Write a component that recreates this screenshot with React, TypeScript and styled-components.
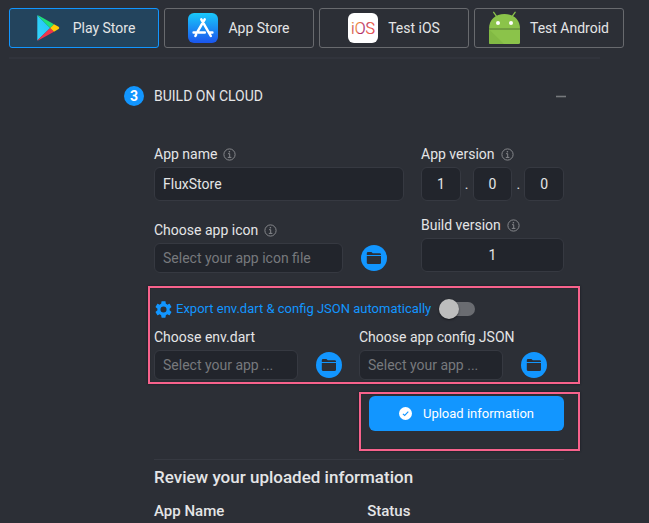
import React, { useState } from "react";
import styled, { createGlobalStyle } from "styled-components";

const blue = "#1296ff";
const line = "#363941";
const field = "#22252c";
const pink = "#f8628c";

const GlobalStyle = createGlobalStyle`
  * { box-sizing: border-box; }
  body {
    margin: 0;
    background: #2c2f36;
    color: #e4e5e6;
    font-family: Roboto, "Liberation Sans", sans-serif;
    font-size: 14px;
    line-height: 20px;
  }
  button, input { font: inherit; color: inherit; margin: 0; }
`;

const Page = styled.main`
  height: 100vh;
  overflow: hidden;
  padding: 8px 25px 0 9px;
`;

const Tabs = styled.nav`
  display: grid;
  grid-template-columns: repeat(4, minmax(0, 1fr));
  gap: 5px;
`;

const Tab = styled.button<{ $active?: boolean }>`
  display: flex;
  align-items: center;
  justify-content: center;
  gap: 10px;
  height: 40px;
  padding: 0;
  white-space: nowrap;
  border: 1px solid ${(p) => (p.$active ? blue : "#686a6e")};
  border-radius: 3px;
  background: ${(p) => (p.$active ? "#23445d" : "transparent")};
  cursor: pointer;
  svg { flex: none; }
`;

const TabsRule = styled.hr`
  height: 2px;
  margin: 9px 24px 0 0;
  border: 0;
  background: #31343c;
`;

const Section = styled.section`
  margin: 26px 57px 0 115px;
`;

const SectionHeader = styled.header`
  display: flex;
  align-items: center;
  gap: 10px;
  height: 22px;
`;

const Step = styled.span`
  width: 20px;
  border-radius: 50%;
  background: ${blue};
  color: #fff;
  text-align: center;
  font-weight: 700;
`;

const SectionTitle = styled.h2`
  flex: 1;
  margin: 0;
  font-size: 14px;
  font-weight: 400;
`;

const Collapse = styled.button`
  display: flex;
  padding: 0;
  border: 0;
  background: none;
  color: #77797d;
  cursor: pointer;
`;

const Body = styled.div`
  margin: 37px 3px 0 30px;
`;

const Columns = styled.div`
  display: grid;
  grid-template-columns: minmax(0, 1fr) 143px;
  column-gap: 17px;
`;

const Stack = styled.div<{ $gap: number }>`
  display: flex;
  flex-direction: column;
  gap: ${(p) => p.$gap}px;
`;

const Label = styled.label`
  display: flex;
  align-items: center;
  gap: 6px;
  height: 20px;
  margin-bottom: 3px;
  white-space: nowrap;
`;

const Legend = styled(Label).attrs({ as: "span" })``;

const Input = styled.input<{ $center?: boolean; $small?: boolean }>`
  display: block;
  flex: 1;
  width: 100%;
  min-width: 0;
  height: ${(p) => (p.$small ? 30 : 34)}px;
  padding: 0 8px;
  border: 1px solid ${line};
  border-radius: 6px;
  outline: 0;
  background: ${field};
  text-align: ${(p) => (p.$center ? "center" : "left")};
  text-overflow: ellipsis;
  &::placeholder { color: #77797d; opacity: 1; }
`;

const VersionRow = styled.div`
  display: flex;
  align-items: center;
`;

const Dot = styled.span`
  width: 12px;
  text-align: center;
`;

const FileRow = styled.div`
  display: flex;
  align-items: center;
  gap: 18px;
  padding-right: 17px;
`;

const FolderButton = styled.button`
  display: grid;
  place-items: center;
  flex: none;
  width: 26px;
  height: 26px;
  padding: 0;
  border: 0;
  border-radius: 50%;
  background: ${blue};
  color: #2c2f36;
  cursor: pointer;
`;

const Highlight = styled.div<{ $inset: string }>`
  position: relative;
  &::after {
    content: "";
    position: absolute;
    inset: ${(p) => p.$inset};
    border: 2px solid ${pink};
    box-shadow: 0 0 2px #16181d, inset 0 0 1px #16181d;
    pointer-events: none;
  }
`;

const ExportArea = styled(Highlight)`
  margin-top: 25px;
`;

const ExportRow = styled.div`
  display: flex;
  align-items: center;
  gap: 8px;
  height: 22px;
  margin-bottom: 7px;
`;

const ExportLabel = styled.label`
  display: flex;
  align-items: center;
  gap: 4px;
  padding-left: 1px;
  color: ${blue};
  font-size: 13px;
  white-space: nowrap;
`;

const Switch = styled.input`
  appearance: none;
  display: flex;
  align-items: center;
  width: 36px;
  height: 14px;
  border-radius: 7px;
  background: #6a6c71;
  cursor: pointer;
  &::before {
    content: "";
    width: 20px;
    height: 20px;
    border-radius: 50%;
    background: #bdbdbd;
    box-shadow: 0 1px 2px rgba(0, 0, 0, 0.5);
  }
  &:checked { justify-content: flex-end; background: #1c5c91; }
  &:checked::before { background: ${blue}; }
`;

const Halves = styled.div`
  display: grid;
  grid-template-columns: repeat(2, minmax(0, 1fr));
`;

const Actions = styled.div`
  display: flex;
  justify-content: flex-end;
  margin-top: 16px;
`;

const UploadButton = styled.button`
  display: flex;
  align-items: center;
  justify-content: center;
  gap: 11px;
  width: 195px;
  height: 35px;
  padding: 0;
  border: 0;
  border-radius: 6px;
  background: ${blue};
  color: #fff;
  font-size: 13px;
  cursor: pointer;
`;

const Rule = styled.hr`
  height: 1px;
  margin: 28px 0 0;
  border: 0;
  background: ${line};
`;

const ReviewTitle = styled.h3`
  margin: 7px 0 14px;
  font-size: 17px;
  font-weight: 500;
`;

const Table = styled.table`
  width: 100%;
  border-collapse: collapse;
  table-layout: fixed;
  font-size: 15px;
  th {
    padding: 0;
    text-align: left;
    font-weight: 500;
  }
  th:first-child { width: 52%; }
`;

const PlayIcon = () => (
  <svg width="30" height="30" viewBox="0 0 30 30" aria-hidden="true">
    <defs>
      <linearGradient id="play" x1="1" y1="0" x2="0" y2="1">
        <stop offset="0" stopColor="#20c6f5" />
        <stop offset="1" stopColor="#36d4fb" />
      </linearGradient>
    </defs>
    <path d="M4.3 2.2 17.2 15 4.3 27.6Z" fill="url(#play)" />
    <path d="M4.3 2.2Q5 2.3 6 2.8L21 11.2 17.2 15Z" fill="#1fe07a" />
    <path d="M4.3 27.6Q5 27.6 6 27L21 18.7 17.2 15Z" fill="#f0344b" />
    <path d="M21 11.2 25.6 13.8Q27 15 25.6 16.1L21 18.7 17.2 15Z" fill="#ffcb05" />
  </svg>
);

const AppStoreIcon = () => (
  <svg width="30" height="30" viewBox="0 0 30 30" aria-hidden="true">
    <defs>
      <linearGradient id="store" x1="0" y1="0" x2="0" y2="1">
        <stop offset="0" stopColor="#19c9fb" />
        <stop offset="1" stopColor="#1b55ed" />
      </linearGradient>
    </defs>
    <rect width="30" height="30" rx="6" fill="url(#store)" />
    <g stroke="#fff" strokeWidth="2.5" strokeLinecap="round" fill="none">
      <path d="M16.7 6.3 9.7 18.4M13.3 6.3 22.8 23M5.6 19.4H16.8M21.4 19.4H24.4M8.1 21.7 7.4 23" />
    </g>
  </svg>
);

const IosIcon = () => (
  <svg width="30" height="30" viewBox="0 0 30 30" aria-hidden="true">
    <defs>
      <linearGradient id="ios" gradientUnits="userSpaceOnUse" x1="3" y1="10" x2="27" y2="18">
        <stop offset="0" stopColor="#f9a825" />
        <stop offset="0.14" stopColor="#c43a55" />
        <stop offset="0.26" stopColor="#f08a2c" />
        <stop offset="0.45" stopColor="#c22f5e" />
        <stop offset="0.58" stopColor="#a0246e" />
        <stop offset="0.72" stopColor="#ee5a32" />
        <stop offset="1" stopColor="#dc2f4a" />
      </linearGradient>
    </defs>
    <rect width="30" height="30" rx="6" fill="#fff" />
    <text x="15" y="20.5" textAnchor="middle" fontFamily="Roboto, sans-serif" fontWeight="300" fontSize="16" fill="url(#ios)" stroke="url(#ios)" strokeWidth="0.2">iOS</text>
  </svg>
);

const AndroidIcon = () => (
  <svg width="31" height="34" viewBox="0 0 31 34" aria-hidden="true">
    <path d="M4.7 1.3 7.7 5.7M26.1 1.3 23 5.7" stroke="#8bc34a" strokeWidth="1.3" strokeLinecap="round" />
    <path d="M0 17.7C0 8.600 6.500 3 15.500 3S31 8.600 31 17.700Z" fill="#8bc34a" />
    <path d="M0 18.200H31V31.500Q31 33 29.500 33H1.500Q0 33 0 31.500Z" fill="#8bc34a" />
    <path d="M0 18.200 15 33H1.500Q0 33 0 31.500Z" fill="#82b944" />
    <path d="M0 18H31" stroke="#6fa23a" strokeWidth="0.8" />
    <circle cx="9" cy="12" r="2" fill="#fff" />
    <circle cx="22" cy="12" r="2" fill="#fff" />
  </svg>
);

const InfoIcon = () => (
  <svg width="13" height="13" viewBox="0 0 13 13" fill="none" stroke="#85878b" aria-hidden="true">
    <circle cx="6.500" cy="6.500" r="5.600" strokeWidth="1" />
    <circle cx="6.400" cy="3.700" r="0.800" fill="#85878b" stroke="none" />
    <path d="M5 5.700H6.700V9.300M4.800 9.400H8.400" strokeWidth="1" />
  </svg>
);

const FolderIcon = () => (
  <svg width="16" height="14" viewBox="0 0 16 14" fill="currentColor" aria-hidden="true">
    <path d="M0.800 4V2.300Q0.800 1 2.100 1H5.400L6.800 2.200H13.700Q15 2.200 15 3.500V4Z" />
    <path d="M0.800 5H15V11.500Q15 13 13.500 13H2.300Q0.800 13 0.800 11.500Z" />
  </svg>
);

const GearIcon = () => (
  <svg width="17" height="17" viewBox="2 2 20 20" fill="currentColor" aria-hidden="true">
    <path d="M19.140 12.940c.04-.3.060-.610.060-.940 0-.320-.020-.640-.070-.940l2.030-1.580c.180-.140.230-.410.120-.610l-1.920-3.320c-.120-.220-.370-.290-.590-.220l-2.390.960c-.5-.380-1.030-.7-1.620-.940l-.360-2.540c-.040-.240-.240-.410-.480-.410h-3.840c-.240 0-.430.170-.470.410l-.360 2.540c-.590.240-1.130.570-1.620.940l-2.390-.960c-.220-.080-.470 0-.590.220L2.740 8.870c-.120.210-.080.470.120.610l2.030 1.580c-.050.3-.090.630-.090.940s.020.640.070.940l-2.030 1.580c-.180.140-.230.410-.120.610l1.920 3.320c.120.220.370.290.590.220l2.390-.960c.5.380 1.030.7 1.620.940l.360 2.540c.050.240.240.410.480.410h3.840c.240 0 .440-.170.470-.410l.360-2.540c.590-.240 1.130-.560 1.620-.940l2.390.960c.220.080.470 0 .590-.220l1.920-3.320c.120-.220.070-.470-.120-.610l-2.010-1.580zM12 15.600A3.600 3.600 0 1 1 12 8.400a3.600 3.600 0 0 1 0 7.200z" />
  </svg>
);

const CheckIcon = () => (
  <svg width="13" height="13" viewBox="0 0 13 13" aria-hidden="true">
    <circle cx="6.500" cy="6.500" r="6.500" fill="#fff" />
    <path d="M3.900 6.800 5.700 8.500 9.300 4.700" fill="none" stroke={blue} strokeWidth="1.100" />
  </svg>
);

const targets = [
  { name: "Play Store", Icon: PlayIcon },
  { name: "App Store", Icon: AppStoreIcon },
  { name: "Test iOS", Icon: IosIcon },
  { name: "Test Android", Icon: AndroidIcon },
];

function FileField({ id, label, placeholder, info }: { id: string; label: string; placeholder: string; info?: boolean }) {
  return (
    <div>
      <Label htmlFor={id}>
        {label}
        {info && <InfoIcon />}
      </Label>
      <FileRow>
        <Input id={id} $small readOnly placeholder={placeholder} />
        <FolderButton type="button" aria-label={`${label}: browse`}>
          <FolderIcon />
        </FolderButton>
      </FileRow>
    </div>
  );
}

export default function App() {
  const [target, setTarget] = useState("Play Store");
  return (
    <Page>
      <GlobalStyle />
      <Tabs>
        {targets.map(({ name, Icon }) => (
          <Tab key={name} type="button" $active={name === target} onClick={() => setTarget(name)}>
            <Icon />
            {name}
          </Tab>
        ))}
      </Tabs>
      <TabsRule />
      <Section>
        <SectionHeader>
          <Step>3</Step>
          <SectionTitle>BUILD ON CLOUD</SectionTitle>
          <Collapse type="button" aria-label="Collapse">
            <svg width="12" height="20" viewBox="0 0 12 20" aria-hidden="true">
              <path d="M1 10.500H11" stroke="currentColor" strokeWidth="1.600" />
            </svg>
          </Collapse>
        </SectionHeader>
        <Body>
          <Columns>
            <Stack $gap={19}>
              <div>
                <Label htmlFor="name">App name <InfoIcon /></Label>
                <Input id="name" defaultValue="FluxStore" />
              </div>
              <FileField id="icon" label="Choose app icon" placeholder="Select your app icon file" info />
            </Stack>
            <Stack $gap={14}>
              <div role="group" aria-labelledby="version">
                <Legend id="version">App version <InfoIcon /></Legend>
                <VersionRow>
                  <Input $center aria-label="Major" defaultValue="1" />
                  <Dot>.</Dot>
                  <Input $center aria-label="Minor" defaultValue="0" />
                  <Dot>.</Dot>
                  <Input $center aria-label="Patch" defaultValue="0" />
                </VersionRow>
              </div>
              <div>
                <Label htmlFor="build">Build version <InfoIcon /></Label>
                <Input id="build" $center defaultValue="1" />
              </div>
            </Stack>
          </Columns>
          <ExportArea $inset="-12px -16px -4px -6px">
            <ExportRow>
              <ExportLabel htmlFor="export">
                <GearIcon />
                Export env.dart &amp; config JSON automatically
              </ExportLabel>
              <Switch id="export" type="checkbox" role="switch" />
            </ExportRow>
            <Halves>
              <FileField id="env" label="Choose env.dart" placeholder="Select your app ..." />
              <FileField id="config" label="Choose app config JSON" placeholder="Select your app ..." />
            </Halves>
          </ExportArea>
          <Actions>
            <Highlight $inset="-4px -16px -20px -10px">
              <UploadButton type="button">
                <CheckIcon />
                Upload information
              </UploadButton>
            </Highlight>
          </Actions>
          <Rule />
          <ReviewTitle>Review your uploaded information</ReviewTitle>
          <Table>
            <thead>
              <tr>
                <th scope="col">App Name</th>
                <th scope="col">Status</th>
              </tr>
            </thead>
          </Table>
        </Body>
      </Section>
    </Page>
  );
}
